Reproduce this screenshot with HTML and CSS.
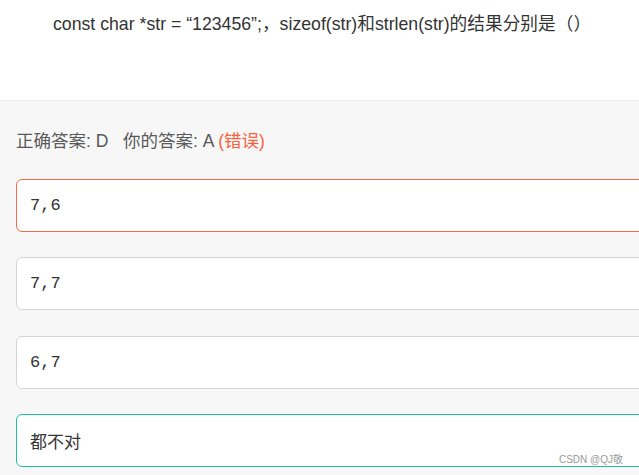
FILE: index.html
```html
<!DOCTYPE html>
<html lang="zh">
<head>
<meta charset="utf-8">
<link rel="stylesheet" href="styles.css">
</head>
<body>
<div class="page">
  <div class="question">const char *str = “123456”;，sizeof(str)和strlen(str)的结果分别是（）</div>
  <div class="answers">
    <div class="result">正确答案: D&nbsp;&nbsp;&nbsp;你的答案: A <span class="wrong">(错误)</span></div>
    <div class="options">
      <div class="option option-wrong"><span class="mono">7,6</span></div>
      <div class="option"><span class="mono">7,7</span></div>
      <div class="option"><span class="mono">6,7</span></div>
      <div class="option option-right"><span class="cjk">都不对</span></div>
    </div>
    <div class="watermark">CSDN @QJ敬</div>
  </div>
</div>
</body>
</html>
```
FILE: styles.css
```css
html, body {
  margin: 0;
  padding: 0;
}
body {
  width: 639px;
  height: 475px;
  overflow: hidden;
  background: #f7f7f7;
  font-family: "Liberation Sans", Arial, "Noto Sans CJK SC", sans-serif;
}
.page {
  display: flex;
  flex-direction: column;
}
.question {
  background: #fff;
  height: 101px;
  box-sizing: border-box;
  padding: 13px 0 0 53px;
  font-size: 17.7px;
  line-height: 22px;
  color: #333;
  border-bottom: 1px solid #ececec;
  white-space: nowrap;
}
.answers {
  position: relative;
  padding: 0 0 0 16px;
}
.result {
  padding-top: 29px;
  font-size: 17.5px;
  line-height: 22px;
  color: #5a5a5a;
  white-space: nowrap;
}
.wrong {
  color: #f8623f;
}
.options {
  margin-top: 27px;
  display: flex;
  flex-direction: column;
  gap: 25.3px;
  width: 660px;
}
.option {
  height: 53px;
  box-sizing: border-box;
  border: 1px solid #d5d5d5;
  border-radius: 6px;
  background: #fff;
  display: flex;
  align-items: center;
  padding-left: 13px;
  color: #333;
}
.option-wrong {
  border-color: #f6694c;
}
.option-right {
  border-color: #1ec19c;
}
.mono {
  font-family: "Liberation Mono", "Courier New", monospace;
  font-size: 17px;
}
.cjk {
  font-family: "Noto Sans CJK SC", sans-serif;
  font-size: 17px;
}
.watermark {
  position: absolute;
  right: 16px;
  bottom: 1px;
  font-size: 10px;
  color: #9a9a9a;
}
```
